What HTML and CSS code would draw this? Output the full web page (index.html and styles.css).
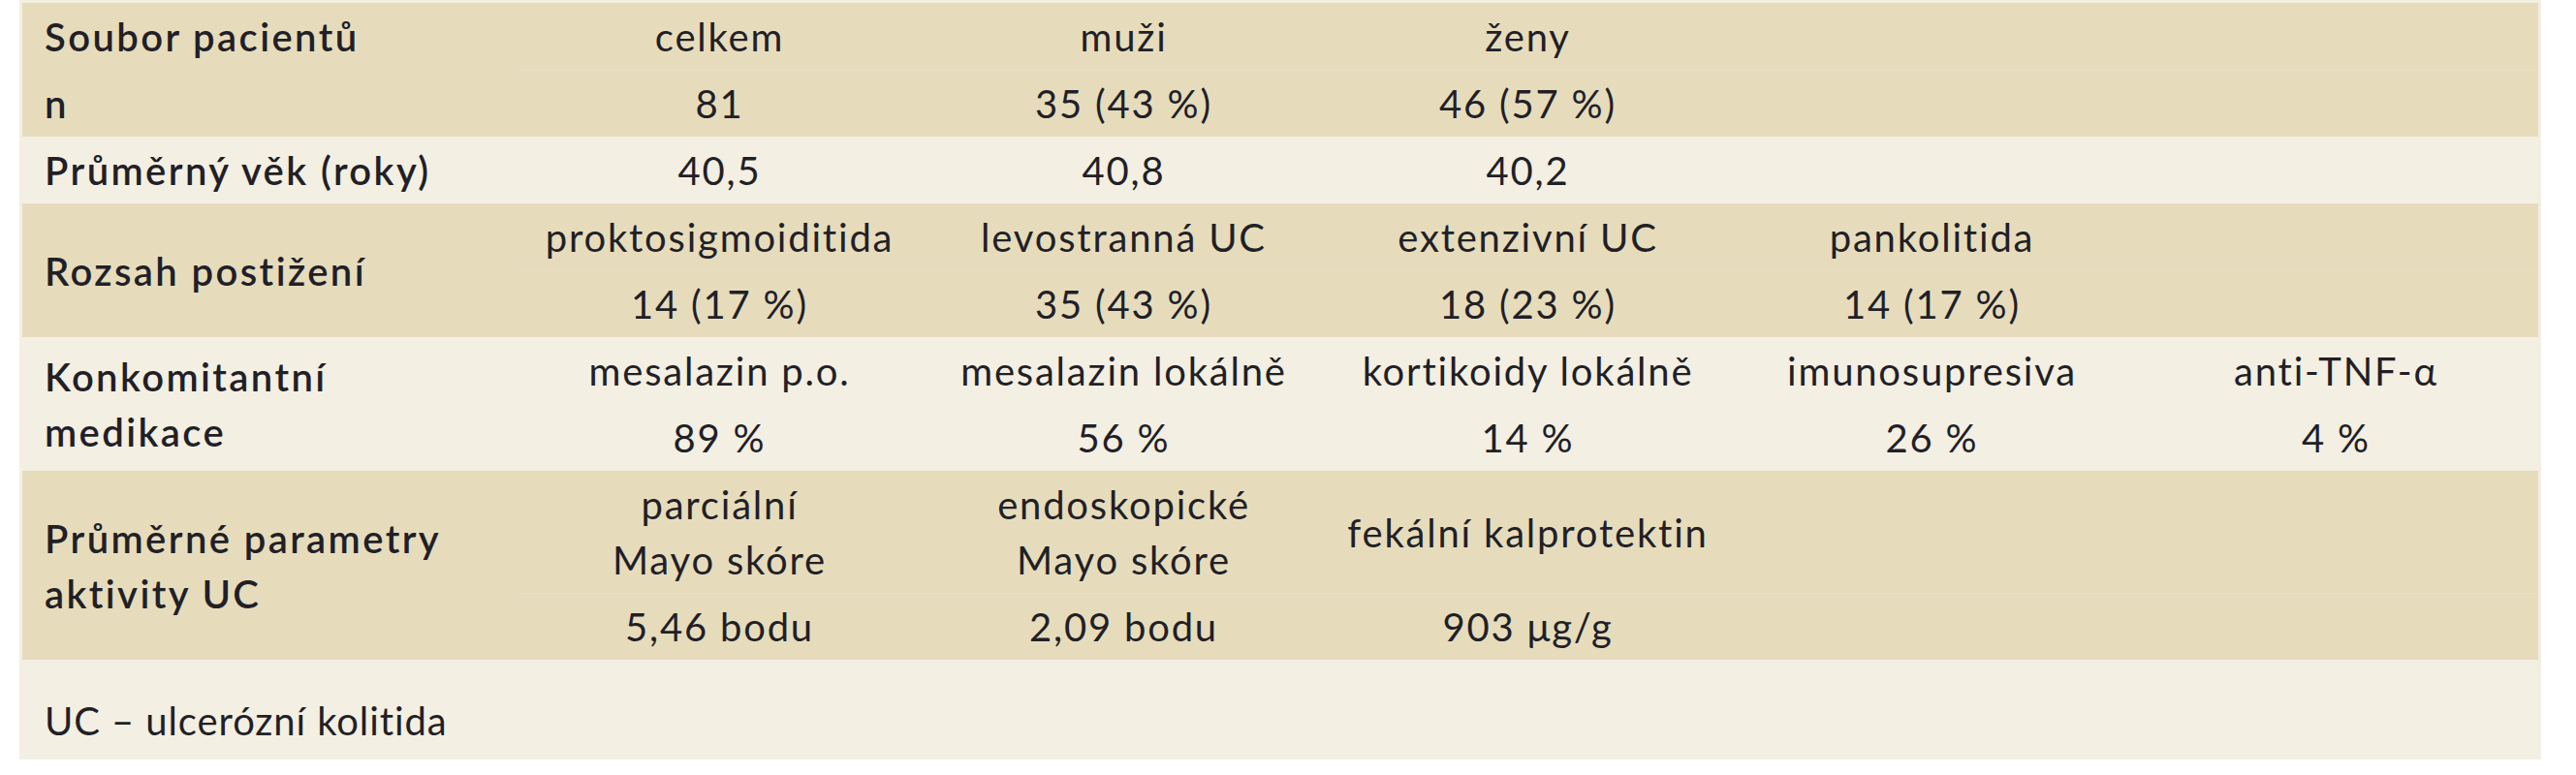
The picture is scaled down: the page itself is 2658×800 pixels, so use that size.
FILE: index.html
```html
<!DOCTYPE html>
<html lang="cs">
<head>
<meta charset="utf-8">
<title>Soubor pacientů</title>
<link rel="stylesheet" href="styles.css">
</head>
<body>
<div class="frame">
<table class="data">
  <colgroup>
    <col class="c-label">
    <col class="c-val"><col class="c-val"><col class="c-val"><col class="c-val"><col class="c-val">
  </colgroup>
  <tbody>
    <tr class="tan">
      <th>Soubor pacientů</th><td>celkem</td><td>muži</td><td>ženy</td><td></td><td></td>
    </tr>
    <tr class="tan sub">
      <th>n</th><td>81</td><td>35 (43 %)</td><td>46 (57 %)</td><td></td><td></td>
    </tr>
    <tr class="light">
      <th>Průměrný věk (roky)</th><td>40,5</td><td>40,8</td><td>40,2</td><td></td><td></td>
    </tr>
    <tr class="tan">
      <th rowspan="2">Rozsah postižení</th><td>proktosigmoiditida</td><td>levostranná UC</td><td>extenzivní UC</td><td>pankolitida</td><td></td>
    </tr>
    <tr class="tan sub">
      <td>14 (17 %)</td><td>35 (43 %)</td><td>18 (23 %)</td><td>14 (17 %)</td><td></td>
    </tr>
    <tr class="light">
      <th rowspan="2">Konkomitantní<br>medikace</th><td>mesalazin p.o.</td><td>mesalazin lokálně</td><td>kortikoidy lokálně</td><td>imunosupresiva</td><td>anti-TNF-α</td>
    </tr>
    <tr class="light sub">
      <td>89 %</td><td>56 %</td><td>14 %</td><td>26 %</td><td>4 %</td>
    </tr>
    <tr class="tan">
      <th rowspan="2">Průměrné parametry<br>aktivity UC</th><td>parciální<br>Mayo skóre</td><td>endoskopické<br>Mayo skóre</td><td>fekální kalprotektin</td><td></td><td></td>
    </tr>
    <tr class="tan sub">
      <td>5,46 bodu</td><td>2,09 bodu</td><td>903 μg/g</td><td></td><td></td>
    </tr>
    <tr class="light">
      <td class="note" colspan="6">UC – ulcerózní kolitida</td>
    </tr>
  </tbody>
</table>
</div>
</body>
</html>
```
FILE: styles.css
```css
html, body {
  margin: 0;
  padding: 0;
  background: #ffffff;
}

.frame {
  margin-left: 20px;
  width: 2602px;
  padding: 3px 3px 0 3px;
  box-sizing: border-box;
  background: #f3efe2;
}

.data {
  width: 2596px;
  border-collapse: collapse;
  table-layout: fixed;
  font-family: Lato, "Liberation Sans", sans-serif;
  font-size: 40px;
  line-height: 57px;
  letter-spacing: 1.8px;
  color: #221f27;
}

.c-label { width: 511px; }
.c-val { width: 417px; }

.data th,
.data td {
  padding: 7px 0 5px 0;
  vertical-align: middle;
  text-align: center;
  font-weight: 400;
  white-space: nowrap;
}

.data th {
  text-align: left;
  padding-left: 23px;
  font-weight: 600;
  letter-spacing: 2.4px;
}

.tan { background: #e6dcbc; }
.light { background: #f3efe2; }

.sub td {
  box-shadow: inset 0 1px 0 #e9e0c5;
}

.light.sub td {
  box-shadow: none;
}

.data td.note {
  text-align: left;
  padding: 35px 0 11px 23px;
  letter-spacing: 0.9px;
}
```
